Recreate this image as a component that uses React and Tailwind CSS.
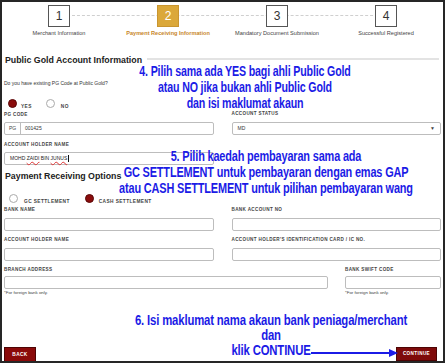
import React from 'react';

const steps = [
  { n: '1', label: 'Merchant Information' },
  { n: '2', label: 'Payment Receiving Information', active: true },
  { n: '3', label: 'Mandatory Document Submission' },
  { n: '4', label: 'Successful Registered' },
];

const Label = ({ children }) => (
  <div className="h-[6px] leading-[6px] text-[4.6px] font-bold tracking-[0.35px] text-[#444] uppercase whitespace-nowrap">
    {children}
  </div>
);

const Input = ({ children, className = '' }) => (
  <div className={`h-[13px] border border-[#bdbdbd] rounded-[2px] bg-white flex items-center ${className}`}>
    {children}
  </div>
);

const Radio = ({ checked }) =>
  checked ? (
    <span className="w-[9px] h-[9px] rounded-full bg-[#8a0c0c] border border-[#5a0606] inline-block" />
  ) : (
    <span className="w-[9px] h-[9px] rounded-full bg-white border border-[#aaa] inline-block" />
  );

const RadioText = ({ children }) => (
  <span className="text-[4.8px] font-bold tracking-[0.4px] text-[#444]">{children}</span>
);

// blue notes drawn over the form, condensed with a horizontal scale
const Annotation = ({ lines, className }) => (
  <div
    className={`absolute w-[420px] text-center text-[#1b1be6] font-bold text-[14px] leading-[16px] whitespace-nowrap origin-center ${className}`}
    style={{ fontFamily: '"Liberation Sans", sans-serif', letterSpacing: '-0.2px' }}
  >
    {lines.map((l) => (
      <div key={l}>{l}</div>
    ))}
  </div>
);

export default function App() {
  return (
    <div
      className="relative w-[445px] h-[363px] border-2 border-[#262626] bg-white overflow-hidden text-[#333]"
      style={{ fontFamily: '"Liberation Sans", Arial, sans-serif' }}
    >
      {/* Stepper */}
      <div className="relative grid grid-cols-4 px-[2.5px] pt-[3px]">
        <div className="absolute left-[70px] right-[55px] top-[13px] border-t border-dashed border-[#cfcfcf]" />
        {steps.map((s) => (
          <div key={s.n} className="relative flex flex-col items-center">
            <div
              className={`w-[22px] h-[22px] flex items-center justify-center text-[12px] ${
                s.active
                  ? 'bg-[#dba83a] border border-[#c99530] text-white'
                  : 'bg-white border border-[#555] text-[#333]'
              }`}
            >
              {s.n}
            </div>
            <div
              className={`mt-[3px] text-[5.6px] leading-[7px] whitespace-nowrap ${
                s.active ? 'text-[#c7862b] font-bold' : 'text-[#444]'
              }`}
            >
              {s.label}
            </div>
          </div>
        ))}
      </div>

      <div className="px-[2px]">
        {/* Public Gold Account Information */}
        <div className="mt-[17px] h-[12px] flex items-center">
          <div className="pl-[1px] text-[8.8px] font-bold text-[#222] whitespace-nowrap leading-[12px]">
            Public Gold Account Information
          </div>
          <div className="flex-1 h-[2px] bg-[#e3e3e3] ml-[5px] mr-[2px] -mt-[3px]" />
        </div>

        <div className="mt-[14px] h-[6px] leading-[6px] text-[5px] text-[#333]">
          Do you have existing PG Code at Public Gold?
        </div>

        <div className="mt-[12px] h-[10px] flex items-center pl-[4px]">
          <Radio checked />
          <span className="ml-[4px]"><RadioText>YES</RadioText></span>
          <span className="ml-[14px]"><Radio /></span>
          <span className="ml-[6px]"><RadioText>NO</RadioText></span>
        </div>

        <div className="grid grid-cols-2 gap-x-[18px]">
          <div>
            <div className="mt-[4px]"><Label>PG Code</Label></div>
            <Input className="mt-[4px]">
              <span className="h-full w-[16px] border-r border-[#bdbdbd] flex items-center justify-center text-[5px] text-[#444]">
                PG
              </span>
              <span className="ml-[4px] text-[5px] text-[#333]">001425</span>
            </Input>
            <div className="mt-[7px]"><Label>Account Holder Name</Label></div>
            <Input className="mt-[4px]">
              <span className="ml-[5px] text-[5px] text-[#222] whitespace-nowrap">
                MOHD{' '}
                <span className="underline decoration-wavy decoration-[#d33] decoration-[0.5px]">ZAIDI</span> BIN{' '}
                <span className="underline decoration-wavy decoration-[#d33] decoration-[0.5px]">JUNUS</span>
              </span>
              <span className="ml-[1px] w-[0.5px] h-[7px] bg-[#111]" />
            </Input>
          </div>
          <div>
            <div className="mt-[3px]"><Label>Account Status</Label></div>
            <Input className="mt-[5px] justify-between px-[5px]">
              <span className="text-[5px] text-[#333]">MD</span>
              <span className="text-[5px] text-[#444]">▼</span>
            </Input>
          </div>
        </div>

        {/* Payment Receiving Options */}
        <div className="mt-[5px] h-[12px] leading-[12px] pl-[1px] text-[8.8px] font-bold text-[#222]">
          Payment Receiving Options
        </div>

        <div className="mt-[11px] h-[10px] flex items-center pl-[5px]">
          <Radio />
          <span className="ml-[6px]"><RadioText>GC SETTLEMENT</RadioText></span>
          <span className="ml-[15px]"><Radio checked /></span>
          <span className="ml-[5px]"><RadioText>CASH SETTLEMENT</RadioText></span>
        </div>

        <div className="grid grid-cols-2 gap-x-[18px]">
          <div>
            <div className="mt-[4px]"><Label>Bank Name</Label></div>
            <Input className="mt-[5px]" />
            <div className="mt-[6px]"><Label>Account Holder Name</Label></div>
            <Input className="mt-[5px]" />
          </div>
          <div>
            <div className="mt-[4px]"><Label>Bank Account No</Label></div>
            <Input className="mt-[5px]" />
            <div className="mt-[6px]"><Label>Account Holder's Identification Card / IC No.</Label></div>
            <Input className="mt-[5px]" />
          </div>
        </div>

        <div className="grid grid-cols-[324px_1fr] gap-x-[17px]">
          <div>
            <div className="mt-[6px]"><Label>Branch Address</Label></div>
            <Input className="mt-[3px]" />
            <div className="mt-[1px] text-[4.4px] leading-[6px] text-[#444]">*For foreign bank only.</div>
          </div>
          <div>
            <div className="mt-[6px]"><Label>Bank Swift Code</Label></div>
            <Input className="mt-[3px]" />
            <div className="mt-[1px] text-[4.4px] leading-[6px] text-[#444]">*For foreign bank only.</div>
          </div>
        </div>

        <div className="mt-[51px] flex justify-between pr-[4px]">
          <button className="w-[32px] h-[15px] bg-[#8a0a0a] border border-[#4d0404] text-white text-[4.8px] font-bold tracking-[0.4px]">
            BACK
          </button>
          <button className="w-[41px] h-[14px] bg-[#7e0a0a] border border-[#4d0404] text-white text-[4.6px] font-bold tracking-[0.4px]">
            CONTINUE
          </button>
        </div>
      </div>

      {/* Annotations */}
      <Annotation
        className="left-[33px] top-[61px] scale-x-[0.76]"
        lines={['4. Pilih sama ada YES bagi ahli Public Gold', 'atau NO jika bukan ahli Public Gold', 'dan isi maklumat akaun']}
      />
      <Annotation
        className="left-[54px] top-[146px] scale-x-[0.78]"
        lines={[
          '5. Pilih kaedah pembayaran sama ada',
          'GC SETTLEMENT untuk pembayaran dengan emas GAP',
          'atau CASH SETTLEMENT untuk pilihan pembayaran wang',
        ]}
      />
      <Annotation
        className="left-[59px] top-[311px] !leading-[15px] scale-x-[0.81]"
        lines={['6. Isi maklumat nama akaun bank peniaga/merchant', 'dan', 'klik CONTINUE']}
      />
      <svg className="absolute left-[309px] top-[346px]" width="88" height="10" viewBox="0 0 88 10">
        <line x1="0" y1="5" x2="80" y2="5" stroke="#1b1be6" strokeWidth="2" />
        <polygon points="78,1 87,5 78,9" fill="#1b1be6" />
      </svg>
    </div>
  );
}
